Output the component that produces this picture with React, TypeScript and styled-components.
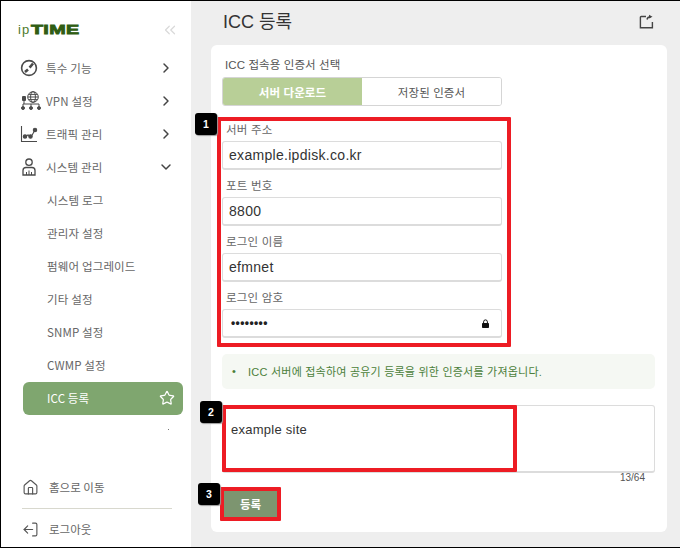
import React from "react";
import styled, { createGlobalStyle } from "styled-components";
import { ChevronRight, ChevronDown, ChevronsLeft, Star, Home, LogOut } from "lucide-react";

const Global = createGlobalStyle`
  html, body { margin: 0; padding: 0; background: #fff; }
  * { box-sizing: border-box; }
  body { font-family: "Liberation Sans", "Noto Sans CJK KR", sans-serif; }
`;

const Frame = styled.div`
  width: 680px; height: 548px; display: flex; overflow: hidden;
  border: 1px solid #000; border-right-width: 0;
  background: #eeeeee;
`;
const Sidebar = styled.aside`
  width: 190px; flex: none; background: #fff; display: flex; flex-direction: column;
  font-family: "Noto Sans CJK KR", "Liberation Sans", sans-serif;
`;
const LogoRow = styled.div`
  height: 50px; padding: 7px 12px 0 17px; display: flex; align-items: center; justify-content: space-between;
`;
const Logo = styled.div`
  display: flex; align-items: baseline; font-family: "Liberation Sans", sans-serif;
`;
const LogoIp = styled.span`
  font-size: 13px; letter-spacing: 1px; color: #4e7a2a;
`;
const LogoTime = styled.span`
  font-size: 13px; font-weight: 700; color: #2f5d12; -webkit-text-stroke: 0.8px #2f5d12;
  display: inline-block; transform: scaleX(1.52); transform-origin: left; margin-left: 1px; width: 49px; letter-spacing: 0.2px;
`;
const Collapse = styled.span`
  color: #d9d9d9; display: flex;
`;
const Menu = styled.nav`
  display: flex; flex-direction: column;
`;
const MenuRow = styled.div<{ $active?: boolean; $sub?: boolean }>`
  height: 33px; display: flex; align-items: center; font-size: 11.5px;
  margin-left: ${p => (p.$active ? 22 : 0)}px; margin-right: ${p => (p.$active ? 8 : 0)}px;
  margin-top: ${p => (p.$active ? 1 : 0)}px;
  padding-left: ${p => (p.$active ? 24 : p.$sub ? 46 : 19)}px;
  padding-right: ${p => (p.$active ? 8 : 17)}px;
  padding-bottom: ${p => (p.$active ? 2 : 0)}px;
  color: ${p => (p.$active ? "#fff" : "#666")};
  background: ${p => (p.$active ? "#7fa66f" : "transparent")};
  border-radius: ${p => (p.$active ? 6 : 0)}px;
`;
const IconSlot = styled.span`
  width: 27px; height: 20px; margin-right: -1px; flex: none; display: flex; align-items: center; color: #555;
`;
const RowLabel = styled.span`
  flex: 1; letter-spacing: 0.15px;
`;
const Arrow = styled.span`
  display: flex; color: #444;
`;
const Dot = styled.div`
  width: 1px; height: 1px; background: #777; margin: 14px 0 0 167px;
`;
const Foot = styled.div`
  margin-top: auto; display: flex; flex-direction: column; padding: 0 0 0 21px;
`;
const FootRow = styled.div<{ $last?: boolean }>`
  height: ${p => (p.$last ? 38 : 40)}px; display: flex; align-items: center; gap: 10px; font-size: 11.5px; color: #666;
  padding: ${p => (p.$last ? "2px 0 0" : "0 0 2px")};
`;
const FootRule = styled.div`
  width: 150px; height: 1px; background: #d8d8ce;
`;
const Main = styled.main`
  flex: 1; min-width: 0; padding: 0 13px 15px 20px; display: flex; flex-direction: column;
`;
const Header = styled.header`
  height: 44px; display: flex; align-items: center; justify-content: space-between; padding: 0 0 0 12px;
`;
const Title = styled.h1`
  margin: 0 0 6px; font-size: 18px; font-weight: 400; color: #333;
`;
const ShareBtn = styled.span`
  display: flex; margin: 0 12px 3px 0; color: #444;
`;
const Card = styled.section`
  position: relative; flex: 1; background: #fff; border-radius: 6px; padding: 13px 11px 0 11px;
`;
const Caption = styled.div`
  font-size: 11.5px; color: #555; line-height: 14px; letter-spacing: 0.1px; padding-left: 3px;
`;
const Tabs = styled.div`
  display: flex; width: 280px; height: 29px; margin-top: 5px; border: 1px solid #d5d5d5; border-radius: 3px; overflow: hidden;
`;
const Tab = styled.div<{ $on?: boolean }>`
  flex: 1; display: flex; align-items: center; justify-content: center; font-size: 11.5px; font-weight: ${p => (p.$on ? 700 : 400)};
  background: ${p => (p.$on ? "#b8cf97" : "#fff")}; color: ${p => (p.$on ? "#fff" : "#555")}; letter-spacing: 0.1px;
`;
const Marked = styled.div`
  position: relative; margin: 11px 0 0 -5px; width: 294px; height: 230px;
  border: 4px solid #ed1c24; padding: 0 0 0 1px; border-radius: 1px;
`;
const Badge = styled.span<{ $x: number; $y: number }>`
  position: absolute; left: ${p => p.$x}px; top: ${p => p.$y}px; width: 22px; height: 22px;
  background: #000; color: #fff; border-radius: 3px; font-size: 10.5px; font-weight: 700;
  display: flex; align-items: center; justify-content: center; box-shadow: 1px 1px 1px #999; z-index: 3;
`;
const Field = styled.div`
  height: 56px; width: 280px; display: flex; flex-direction: column;
`;
const FieldLabel = styled.label`
  font-size: 11.5px; color: #666; line-height: 14px; height: 20px; padding: 2px 0 0 4px; letter-spacing: 0.2px;
`;
const InputBox = styled.div`
  height: 29px; border: 1px solid #dcdcdc; border-bottom-width: 2px; border-radius: 3px; display: flex; align-items: center;
  justify-content: space-between; padding: 0 11px 0 6px; font-size: 14px; color: #333; letter-spacing: 0.3px; background: #fff;
`;
const Masked = styled.span`
  font-size: 12px; letter-spacing: 0.4px; color: #222; padding-left: 2px; font-weight: 700;
`;
const Notice = styled.div`
  width: 433px; height: 35px; margin-top: 7px; background: #f5f8f3; border-radius: 5px; display: flex; align-items: center; gap: 12px;
  padding: 0 0 2px 10px; font-size: 11px; color: #4b7f3a; letter-spacing: 0.22px;
`;
const TextBox = styled.div`
  position: relative; width: 433px; height: 68px; margin-top: 16px; border: 1px solid #dcdcdc; border-bottom-width: 2px; border-radius: 3px;
  padding: 16px 8px; font-size: 13px; line-height: 15px; color: #333; letter-spacing: 0.25px;
`;
const TextMark = styled.div`
  position: absolute; left: -1px; top: -1px; width: 295px; height: 67px; border: 4px solid #ed1c24; border-radius: 1px;
`;
const Counter = styled.div`
  width: 423px; text-align: right; font-size: 10px; color: #555; line-height: 12px; margin-top: -1px;
`;
const ButtonMark = styled.div`
  position: relative; margin: 3px 0 0 -2px; width: 61px; height: 34px; border: 4px solid #ed1c24; border-radius: 1px;
`;
const Submit = styled.button`
  width: 100%; height: 100%; border: 0; background: #7d9570; color: #fff; font-size: 11.5px; font-weight: 700; padding: 0;
  font-family: inherit;
`;
const FlippedLogout = styled(LogOut)`
  transform: scaleX(-1);
`;

const Gauge = () => (
  <svg width="18" height="18" viewBox="0 0 18 18" fill="none" stroke="#4a4a4a" strokeWidth="1.6">
    <circle cx="9" cy="9" r="7.4" />
    <path d="M5 13 L8 10.4 M13 4.5 L9.6 8.6" strokeWidth="2.6" />
  </svg>
);
const Vpn = () => (
  <svg width="22" height="20" viewBox="0 0 22 20" fill="none" stroke="#4a4a4a" strokeWidth="1">
    <circle cx="13" cy="6" r="5.3" />
    <ellipse cx="13" cy="6" rx="2.4" ry="5.3" />
    <path d="M8 6h10M8.8 3.4h8.4M8.8 8.6h8.4" />
    <rect x="2" y="5" width="4" height="5" rx="1" fill="#4a4a4a" stroke="none" />
    <path d="M4 10v3M3 13h16M3 13v2M11 13v2M19 13v2" />
    <circle cx="3" cy="17" r="1.5" fill="#4a4a4a" />
    <circle cx="11" cy="17" r="1.5" fill="#4a4a4a" />
    <circle cx="19" cy="17" r="1.5" fill="#4a4a4a" />
  </svg>
);
const Traffic = () => (
  <svg width="18" height="18" viewBox="0 0 18 18" fill="none" stroke="#4a4a4a" strokeWidth="1.1">
    <path d="M1.5 1v15.5H17" />
    <path d="M4.5 12L8 10l3 2 4-7" />
    <circle cx="5" cy="11.5" r="1.7" fill="#4a4a4a" />
    <circle cx="10.5" cy="11.5" r="1.7" fill="#4a4a4a" />
    <circle cx="15" cy="5" r="1.7" fill="#4a4a4a" />
  </svg>
);
const Admin = () => (
  <svg width="18" height="18" viewBox="0 0 18 18" fill="none" stroke="#4a4a4a" strokeWidth="1.3">
    <circle cx="9" cy="4.2" r="3.2" />
    <path d="M3 17v-4.5q0-3 3-3h6q3 0 3 3V17z" />
    <path d="M6.5 17v-3M9 17v-4.5M11.5 17v-3" strokeWidth="1" />
  </svg>
);
const Share = () => (
  <svg width="16" height="16" viewBox="0 0 16 16" fill="none" stroke="#444" strokeWidth="1.4">
    <path d="M7 2.5H2.2a.8.8 0 0 0-.8.8v10.4h12V8" />
    <path d="M8 5.5 Q8.5 2.8 12 2.8" />
    <path d="M10 0.8 L13.5 2.8 L10 4.6z" fill="#444" stroke="none" />
  </svg>
);
const Padlock = () => (
  <svg width="9" height="9" viewBox="0 0 9 9">
    <path d="M2.6 4V2.8a1.9 1.9 0 0 1 3.8 0V4" fill="none" stroke="#111" strokeWidth="1" />
    <rect x="1" y="4" width="7" height="5" rx="0.8" fill="#111" />
  </svg>
);

const primary = [
  { label: "특수 기능", icon: <Gauge /> },
  { label: "VPN 설정", icon: <Vpn /> },
  { label: "트래픽 관리", icon: <Traffic /> },
];
const subs = ["시스템 로그", "관리자 설정", "펌웨어 업그레이드", "기타 설정", "SNMP 설정", "CWMP 설정"];
const fields = [
  { label: "서버 주소", value: "example.ipdisk.co.kr" },
  { label: "포트 번호", value: "8800" },
  { label: "로그인 이름", value: "efmnet" },
];

export default function App() {
  return (
    <Frame>
      <Global />
      <Sidebar>
        <LogoRow>
          <Logo>
            <LogoIp>ip</LogoIp>
            <LogoTime>TIME</LogoTime>
          </Logo>
          <Collapse><ChevronsLeft size={18} strokeWidth={1.6} /></Collapse>
        </LogoRow>
        <Menu>
          {primary.map(m => (
            <MenuRow key={m.label}>
              <IconSlot>{m.icon}</IconSlot>
              <RowLabel>{m.label}</RowLabel>
              <Arrow><ChevronRight size={16} strokeWidth={2.2} /></Arrow>
            </MenuRow>
          ))}
          <MenuRow>
            <IconSlot><Admin /></IconSlot>
            <RowLabel>시스템 관리</RowLabel>
            <Arrow><ChevronDown size={16} strokeWidth={2.2} /></Arrow>
          </MenuRow>
          {subs.map(s => (
            <MenuRow $sub key={s}><RowLabel>{s}</RowLabel></MenuRow>
          ))}
          <MenuRow $active>
            <RowLabel>ICC 등록</RowLabel>
            <Star size={16} strokeWidth={1.8} color="#fff" />
          </MenuRow>
          <Dot />
        </Menu>
        <Foot>
          <FootRow><Home size={17} strokeWidth={1.6} color="#555" /><span>홈으로 이동</span></FootRow>
          <FootRule />
          <FootRow $last><FlippedLogout size={17} strokeWidth={1.6} color="#555" /><span>로그아웃</span></FootRow>
        </Foot>
      </Sidebar>
      <Main>
        <Header>
          <Title>ICC 등록</Title>
          <ShareBtn><Share /></ShareBtn>
        </Header>
        <Card>
          <Caption>ICC 접속용 인증서 선택</Caption>
          <Tabs>
            <Tab $on>서버 다운로드</Tab>
            <Tab>저장된 인증서</Tab>
          </Tabs>
          <Marked>
            <Badge $x={-26} $y={-8}>1</Badge>
            {fields.map(f => (
              <Field key={f.label}>
                <FieldLabel>{f.label}</FieldLabel>
                <InputBox>{f.value}</InputBox>
              </Field>
            ))}
            <Field>
              <FieldLabel>로그인 암호</FieldLabel>
              <InputBox>
                <Masked>••••••••</Masked>
                <Padlock />
              </InputBox>
            </Field>
          </Marked>
          <Notice><span>•</span><span>ICC 서버에 접속하여 공유기 등록을 위한 인증서를 가져옵니다.</span></Notice>
          <TextBox>
            example site
            <TextMark />
            <Badge $x={-23} $y={-5}>2</Badge>
          </TextBox>
          <Counter>13/64</Counter>
          <ButtonMark>
            <Badge $x={-26} $y={-8}>3</Badge>
            <Submit>등록</Submit>
          </ButtonMark>
        </Card>
      </Main>
    </Frame>
  );
}
